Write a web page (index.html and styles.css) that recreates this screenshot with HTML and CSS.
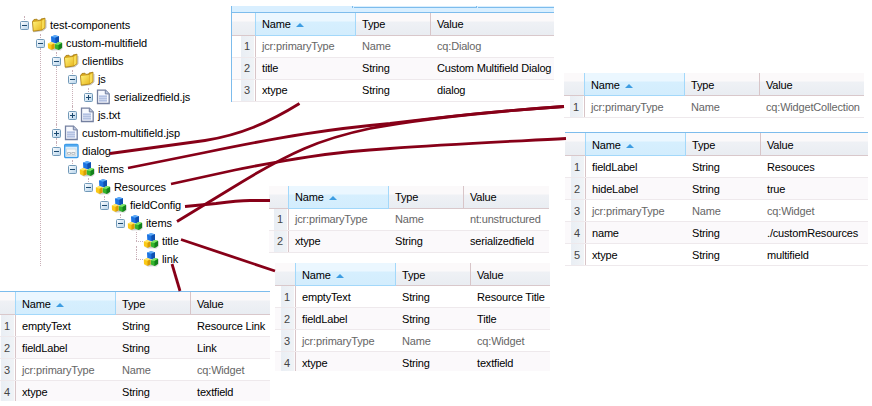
FILE: index.html
```html
<!DOCTYPE html>
<html lang="en">
<head>
<meta charset="utf-8">
<title>Dialog node structure</title>
<link rel="stylesheet" href="styles.css">
</head>
<body>
<svg class="defs" width="0" height="0" aria-hidden="true">
  <defs>
    <linearGradient id="gold" x1="0" y1="0" x2="1" y2="1"><stop offset="0" stop-color="#fff27a"/><stop offset="1" stop-color="#e8b820"/></linearGradient>
    <linearGradient id="box" x1="0" y1="0" x2="1" y2="1"><stop offset="0" stop-color="#fff"/><stop offset="1" stop-color="#b4d2ea"/></linearGradient>
    <linearGradient id="win" x1="0" y1="0" x2="0" y2="1"><stop offset="0" stop-color="#cfe9fb"/><stop offset="1" stop-color="#fff"/></linearGradient>
    <symbol id="minus" viewBox="0 0 9 9"><rect x=".5" y=".5" width="8" height="8" rx="1" fill="url(#box)" stroke="#7199b8"/><path d="M2 4.5h5" stroke="#1c4a70"/></symbol>
    <symbol id="plus" viewBox="0 0 9 9"><rect x=".5" y=".5" width="8" height="8" rx="1" fill="url(#box)" stroke="#7199b8"/><path d="M2 4.5h5M4.5 2v5" stroke="#1c4a70"/></symbol>
    <symbol id="folder" viewBox="0 0 16 16"><path d="M2.500 14.800 12 13.600 15 11V3" fill="none" stroke="#c4c4c4"/><path d="M1.500 4.500 3 2.500l3-.3.8 1.200L10 3V2l4-.8v9.600L11 13l-8.800 1.200z" fill="#d6a51c" stroke="#a3780e" stroke-width=".8"/><path d="M2 5 10.300 4v8.500L2.700 13.600z" fill="url(#gold)"/><path d="M10.800 3.700 13.500 2v8.500l-2.700 2z" fill="#f8dc55"/></symbol>
    <symbol id="cubes" viewBox="0 0 16 16"><path d="M2 14 5 15.500l5-.3 3.500.2L15.800 13V8z" fill="#999" opacity=".5"/><path d="M4 1.500 8 .2l4 1v5.500L8.500 8.300 4.300 7z" fill="#1d74e2"/><path d="M4 1.500 8 .2l4 1L8.200 2.800z" fill="#5cabf8"/><path d="M8.300 2.800 12 1.200v5.500L8.500 8.300z" fill="#0f50b0"/><path d="M.8 8.500 4 7.300l3.500 1v5L4.500 14.800 1 13.300z" fill="#fbc916"/><path d="M.8 8.500 4 7.300l3.500 1-3 1.500z" fill="#ffe765"/><path d="M4.500 9.800 7.500 8.400v5L4.500 14.800z" fill="#d99c05"/><path d="m7.700 9.300 4-2 3.300.5v5l-3.500 2.200-3.600-1.500z" fill="#35b52d"/><path d="m7.700 9.300 4-2 3.300.5-3.500 2.200z" fill="#7de565"/><path d="M11.500 10 15 7.900v4.900l-3.500 2.200z" fill="#13801b"/></symbol>
    <symbol id="file" viewBox="0 0 16 16"><path d="M2.500 1.200h8l3.700 3.700v9.600H2.500z" fill="#f7f9fe" stroke="#7480a0" stroke-width="1.300"/><path d="M10.300 1.200v3.700h3.900" fill="#c2cce2" stroke="#7480a0"/><path d="M4 6h8v7H4z" fill="#ccd6ee"/><path d="M4 7.500h8M4 9.500h8M4 11.500h8" stroke="#b0bedf" stroke-width=".9"/></symbol>
    <symbol id="dialog" viewBox="0 0 16 16"><rect x="1.700" y="1.500" width="13.300" height="13" rx="1" fill="url(#win)" stroke="#3e9ce8" stroke-width="1.400"/><path d="M2 2.800h12.600" stroke="#52a9ef" stroke-width="1.800"/><rect x="3.500" y="6" width="9.500" height="6.700" fill="#f5f7f8" stroke="#c6d1d8" stroke-width=".7"/><path d="M4.500 9.500h3v1.800h-3zM8.800 9.500h3v1.800h-3z" fill="#fff" stroke="#9aa5ad" stroke-width=".7"/></symbol>
  </defs>
</svg>

<main class="canvas">
  <ul class="tree">
    <li class="node stub"><div class="label"><svg class="toggle"><use href="#minus"/></svg><svg class="icon"><use href="#folder"/></svg><span>test-components</span></div>
      <ul>
        <li class="node open"><div class="label"><svg class="toggle"><use href="#minus"/></svg><svg class="icon"><use href="#cubes"/></svg><span>custom-multifield</span></div>
          <ul>
            <li class="node more"><div class="label"><svg class="toggle"><use href="#minus"/></svg><svg class="icon"><use href="#folder"/></svg><span>clientlibs</span></div>
              <ul>
                <li class="node more"><div class="label"><svg class="toggle"><use href="#minus"/></svg><svg class="icon"><use href="#folder"/></svg><span>js</span></div>
                  <ul>
                    <li class="node"><div class="label"><svg class="toggle"><use href="#plus"/></svg><svg class="icon"><use href="#file"/></svg><span>serializedfield.js</span></div></li>
                  </ul>
                </li>
                <li class="node"><div class="label"><svg class="toggle"><use href="#plus"/></svg><svg class="icon"><use href="#file"/></svg><span>js.txt</span></div></li>
              </ul>
            </li>
            <li class="node more"><div class="label"><svg class="toggle"><use href="#plus"/></svg><svg class="icon"><use href="#file"/></svg><span>custom-multifield.jsp</span></div></li>
            <li class="node"><div class="label"><svg class="toggle"><use href="#minus"/></svg><svg class="icon"><use href="#dialog"/></svg><span>dialog</span></div>
              <ul>
                <li class="node"><div class="label"><svg class="toggle"><use href="#minus"/></svg><svg class="icon"><use href="#cubes"/></svg><span>items</span></div>
                  <ul>
                    <li class="node"><div class="label"><svg class="toggle"><use href="#minus"/></svg><svg class="icon"><use href="#cubes"/></svg><span>Resources</span></div>
                      <ul>
                        <li class="node"><div class="label"><svg class="toggle"><use href="#minus"/></svg><svg class="icon"><use href="#cubes"/></svg><span>fieldConfig</span></div>
                          <ul>
                            <li class="node"><div class="label"><svg class="toggle"><use href="#minus"/></svg><svg class="icon"><use href="#cubes"/></svg><span>items</span></div>
                              <ul>
                                <li class="node more"><div class="label leaf"><svg class="icon"><use href="#cubes"/></svg><span>title</span></div></li>
                                <li class="node"><div class="label leaf"><svg class="icon"><use href="#cubes"/></svg><span>link</span></div></li>
                              </ul>
                            </li>
                          </ul>
                        </li>
                      </ul>
                    </li>
                  </ul>
                </li>
              </ul>
            </li>
          </ul>
        </li>
      </ul>
    </li>
  </ul>

  <section class="panel panel-dialog">
    <div class="tabs"><i></i><i></i><i></i></div>
    <div class="row head"><b></b><span class="sorted">Name</span><span>Type</span><span>Value</span></div>
    <div class="row dim"><b>1</b><span>jcr:primaryType</span><span>Name</span><span>cq:Dialog</span></div>
    <div class="row alt"><b>2</b><span>title</span><span>String</span><span>Custom Multifield Dialog</span></div>
    <div class="row"><b>3</b><span>xtype</span><span>String</span><span>dialog</span></div>
  </section>

  <section class="panel panel-collection">
    <div class="row head"><b></b><span class="sorted">Name</span><span>Type</span><span>Value</span></div>
    <div class="row dim"><b>1</b><span>jcr:primaryType</span><span>Name</span><span>cq:WidgetCollection</span></div>
  </section>

  <section class="panel panel-resources lined">
    <div class="row head"><b></b><span class="sorted">Name</span><span>Type</span><span>Value</span></div>
    <div class="row"><b>1</b><span>fieldLabel</span><span>String</span><span>Resouces</span></div>
    <div class="row alt"><b>2</b><span>hideLabel</span><span>String</span><span>true</span></div>
    <div class="row dim"><b>3</b><span>jcr:primaryType</span><span>Name</span><span>cq:Widget</span></div>
    <div class="row alt"><b>4</b><span>name</span><span>String</span><span>./customResources</span></div>
    <div class="row"><b>5</b><span>xtype</span><span>String</span><span>multifield</span></div>
  </section>

  <section class="panel panel-config">
    <div class="row head"><b></b><span class="sorted">Name</span><span>Type</span><span>Value</span></div>
    <div class="row dim"><b>1</b><span>jcr:primaryType</span><span>Name</span><span>nt:unstructured</span></div>
    <div class="row alt"><b>2</b><span>xtype</span><span>String</span><span>serializedfield</span></div>
  </section>

  <section class="panel panel-title">
    <div class="row head"><b></b><span class="sorted">Name</span><span>Type</span><span>Value</span></div>
    <div class="row"><b>1</b><span>emptyText</span><span>String</span><span>Resource Title</span></div>
    <div class="row alt"><b>2</b><span>fieldLabel</span><span>String</span><span>Title</span></div>
    <div class="row dim"><b>3</b><span>jcr:primaryType</span><span>Name</span><span>cq:Widget</span></div>
    <div class="row alt"><b>4</b><span>xtype</span><span>String</span><span>textfield</span></div>
  </section>

  <section class="panel panel-link lined">
    <div class="row head"><b></b><span class="sorted">Name</span><span>Type</span><span>Value</span></div>
    <div class="row"><b>1</b><span>emptyText</span><span>String</span><span>Resource Link</span></div>
    <div class="row alt"><b>2</b><span>fieldLabel</span><span>String</span><span>Link</span></div>
    <div class="row dim"><b>3</b><span>jcr:primaryType</span><span>Name</span><span>cq:Widget</span></div>
    <div class="row alt"><b>4</b><span>xtype</span><span>String</span><span>textfield</span></div>
  </section>

  <svg class="wires" viewBox="0 0 872 406" aria-hidden="true">
    <path d="M110 153.500 205 140.500C240 135 268 123 299.500 103.500"/>
    <path d="M128 168 205 152.500C285 136 330 129 390 123.500 450 116 510 110 564 106.500"/>
    <path d="M171 184 235 170C285 160 330 152 390 148.500 450 144 510 141.500 566 138.500"/>
    <path d="M177 221.500 232 188C290 152 320 139 370 128.500 430 117 500 111 564 106.500"/>
    <path d="M185 206.500 216 203.500Q238 200.500 250 200.500H270"/>
    <path d="M181 239.500 275 271"/>
    <path d="M172 264 180 291"/>
  </svg>
</main>
</body>
</html>
```
FILE: styles.css
```css
* { box-sizing: border-box; }
body { margin: 0; background: #fff; font: 11px/13px "Liberation Sans", Arial, sans-serif; color: #000; }
.defs { position: absolute; }
.canvas { position: relative; width: 872px; height: 406px; overflow: hidden; }

.tree, .tree ul { list-style: none; margin: 0; padding: 0; }
.tree { padding: 16px 0 0 16px; width: 232px; letter-spacing: -.08px; }
.tree ul { padding-left: 16px; }
.node { position: relative; }
.label { display: flex; align-items: center; height: 18px; white-space: nowrap; }
.leaf { padding-left: 16px; }
.toggle { width: 9px; height: 9px; margin: 0 3px 0 4px; }
.leaf::before { content: ""; width: 7px; margin: 0 0 0 -8px; border-top: 1px dotted #c9b0b8; }
.icon { width: 16px; height: 16px; margin-left: -1px; margin-right: 3px; }
.leaf .icon { margin-left: 0; }
/* dotted connectors between siblings */
.node > ul > .node::before,
.more::after { content: ""; position: absolute; left: 8px; border-left: 1px dotted #c9b0b8; }
.node > ul > .node::before { top: 0; height: 4px; }
.more::after { top: 14px; bottom: 0; }
.node > ul > .node:has(> .leaf)::before { height: 9px; }
.open::after { content: ""; position: absolute; left: 8px; top: 14px; height: 218px; border-left: 1px dotted #c9b0b8; }
.stub::before { content: ""; position: absolute; left: 8px; top: 0; height: 4px; border-left: 1px dotted #c9b0b8; }

.panel { position: absolute; overflow: hidden; letter-spacing: -.18px; }
.lined { border-top: 1px solid #7dbcec; }
.panel-dialog { left: 231px; top: 6px; width: 323px; border-left: 1px solid #7dbcec; }
.panel-collection { left: 564px; top: 73px; width: 300px; --num: 21px; --drop: 1px; }
.panel-resources { left: 565px; top: 132px; width: 303px; --num: 21px; --drop: 1px; }
.panel-config { left: 269px; top: 186px; width: 280px; --num: 20px; }
.panel-title { left: 275px; top: 263px; width: 275px; height: 108px; --num: 21px; --drop: 1px; }
.panel-link { left: 0; top: 291px; width: 270px; height: 110px; --num: 16px; --drop: 1px; }

.row { display: grid; grid-template-columns: var(--num, 24px) 100px 75px 1fr; height: 22px; white-space: nowrap; border-bottom: 1px solid #eee9ec; }
.row > * { padding: calc(4px + var(--drop, 0px)) 0 0 6px; font-weight: normal; }
.row > b { color: #444; text-align: right; padding-right: 5px; padding-left: 0; background: linear-gradient(90deg, #e9eef4, #f0f3f6) right 1px top / 13px 100% no-repeat; border-right: 1px solid #d8c5c8; }
.alt { background: #fbf9fb; }
.dim { color: #666; }
.head { height: 23px; background: linear-gradient(#fbf9fa 0 8px, #eff1f5 9px, #e9edf2); border-bottom: 1px solid #d9c8cb; }
.head > b { background: none; }
.head > span { padding-top: calc(5px + var(--drop, 0px)); }
.head > span:nth-child(3) { border-right: 1px solid #d8c5c8; }
.head > .sorted { background: linear-gradient(#ebf7ff 0 8px, #d6effe 9px, #d3edfd); border: 1px solid #a3d8fa; border-top-width: 0; margin: 0 0 -1px -1px; }
.sorted::after { content: ""; display: inline-block; margin-left: 5px; vertical-align: 1px; border: 4px solid transparent; border-top: 0; border-bottom: 4px solid #3d9de2; }
.tabs { display: flex; height: 7px; gap: 1px; border-bottom: 1px solid #7dbcec; background: #d9efff; }
.tabs i { height: 2px; border-bottom: 1px solid #7dbcec; border-right: 1px solid #7dbcec; }
.tabs i:nth-child(1) { width: 121px; border-bottom: 0; }
.tabs i:nth-child(2) { width: 123px; }
.tabs i:nth-child(3) { flex: 1; border-right: 0; }

.wires { position: absolute; left: 0; top: 0; width: 872px; height: 406px; fill: none; stroke: #870018; stroke-width: 2.8; stroke-linejoin: round; }
```
